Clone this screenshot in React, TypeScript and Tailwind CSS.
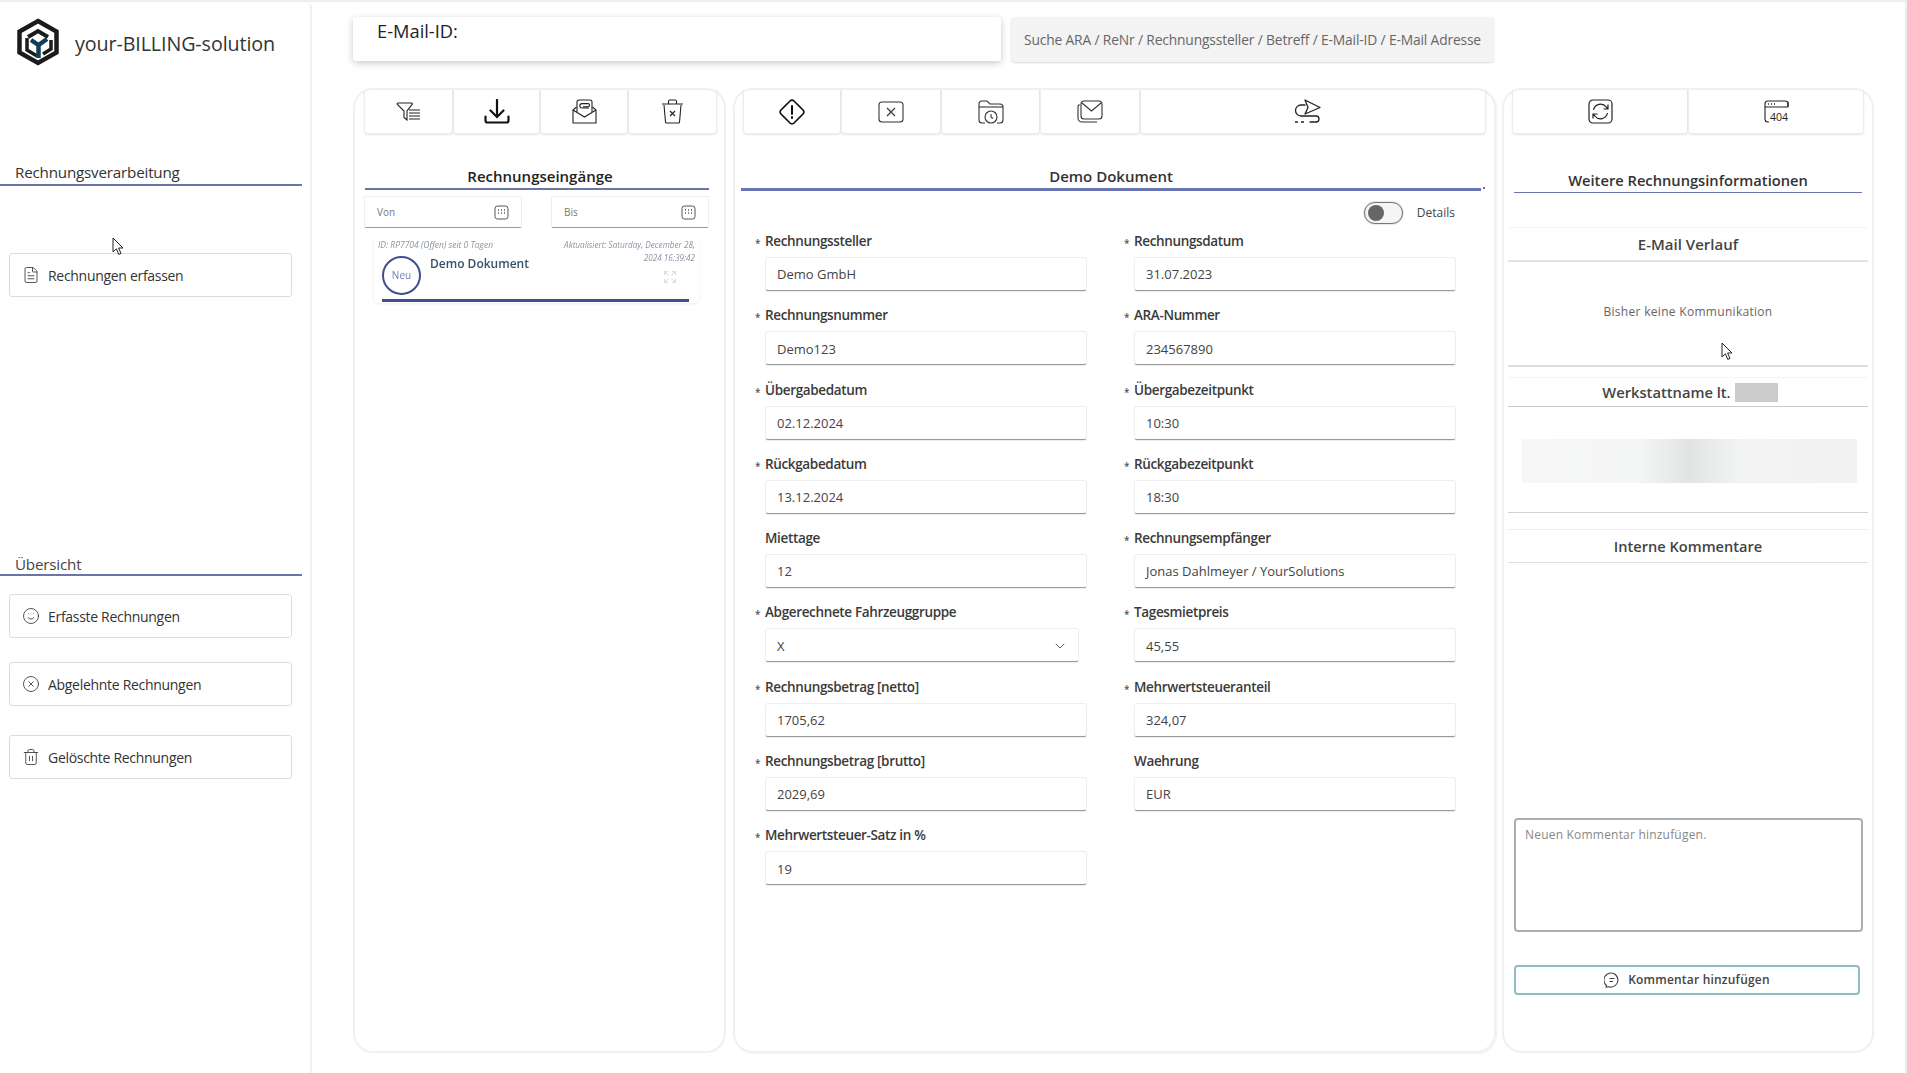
import { ChevronDown, CircleX, Expand, FileText, Smile, Trash2 } from "lucide-react";
import type { ReactNode } from "react";

const leftFields = [
  { label: "Rechnungssteller", value: "Demo GmbH", star: true },
  { label: "Rechnungsnummer", value: "Demo123", star: true },
  { label: "Übergabedatum", value: "02.12.2024", star: true },
  { label: "Rückgabedatum", value: "13.12.2024", star: true },
  { label: "Miettage", value: "12", star: false },
  { label: "Abgerechnete Fahrzeuggruppe", value: "X", star: true, select: true },
  { label: "Rechnungsbetrag [netto]", value: "1705,62", star: true },
  { label: "Rechnungsbetrag [brutto]", value: "2029,69", star: true },
  { label: "Mehrwertsteuer-Satz in %", value: "19", star: true },
];

const rightFields = [
  { label: "Rechnungsdatum", value: "31.07.2023", star: true },
  { label: "ARA-Nummer", value: "234567890", star: true },
  { label: "Übergabezeitpunkt", value: "10:30", star: true },
  { label: "Rückgabezeitpunkt", value: "18:30", star: true },
  { label: "Rechnungsempfänger", value: "Jonas Dahlmeyer / YourSolutions", star: true },
  { label: "Tagesmietpreis", value: "45,55", star: true },
  { label: "Mehrwertsteueranteil", value: "324,07", star: true },
  { label: "Waehrung", value: "EUR", star: false },
];

type FieldProps = { label: string; value: string; star: boolean; select?: boolean };

const Field = ({ label, value, star, select }: FieldProps) => (
  <div className="h-[74.3px]">
    <div className="flex h-5 items-center text-[13.5px] font-semibold leading-5 tracking-[-0.35px] text-[#3a3a3a]">
      <span className="w-[10px] pt-1 text-[10px] text-[#555]">{star ? "*" : ""}</span>
      {label}
    </div>
    <div
      className={`ml-[10px] mt-[6px] flex h-[34px] items-center justify-between rounded-[3px] border border-[#eeeeee] border-b-[#9a9a9a] pl-[11px] pr-[10px] pt-[2px] text-[13px] text-[#444] shadow-[0_1px_1px_rgba(0,0,0,0.08)] ${
        select ? "w-[314px]" : "w-[322px]"
      }`}
    >
      {value}
      {select && <ChevronDown size={16} strokeWidth={1.2} className="text-[#444]" />}
    </div>
  </div>
);

const Tab = ({ className, children }: { className: string; children: ReactNode }) => (
  <div
    className={`flex h-[44px] shrink-0 items-center justify-center rounded-b-[4px] border-x border-b border-[#ececec] shadow-[0_1px_2px_rgba(0,0,0,0.1)] ${className}`}
  >
    {children}
  </div>
);

const SideButton = ({ icon, label }: { icon: ReactNode; label: string }) => (
  <div className="flex h-[44px] w-[283px] items-center gap-[8px] rounded-[3px] border border-[#dcdcdc] pl-[12px] text-[14px] font-medium tracking-[-0.3px] text-[#333]">
    {icon}
    {label}
  </div>
);

const Cursor = ({ className }: { className: string }) => (
  <svg viewBox="0 0 12 19" className={`absolute h-[19px] w-[12px] ${className}`}>
    <path d="M1 1v14l3.4-3.2 2.4 5.6 2.2-1-2.4-5.4H11z" fill="#fff" stroke="#222" strokeWidth="1" />
  </svg>
);

const CalendarIcon = () => (
  <svg viewBox="0 0 15 15" className="h-[15px] w-[15px]" fill="none" stroke="#555" strokeWidth="1">
    <rect x="1" y="1" width="13" height="13" rx="2.5" />
    <path d="M4 5h1M7 5h1M10 5h1M4 8h1M7 8h1M10 8h1" strokeWidth="1.3" />
  </svg>
);

const Logo = () => (
  <svg viewBox="0 0 44 48" className="h-[48px] w-[44px]" fill="none">
    <path d="M22 3 40.5 13.5V34.5L22 45 3.5 34.5V13.5Z" stroke="#1b1b1b" strokeWidth="4.5" />
    <path d="M12 19 22 13 32 19" stroke="#1b1b1b" strokeWidth="4" />
    <path d="M11 20V32L21 38" stroke="#1b1b1b" strokeWidth="3.5" />
    <path d="M27 36 35 31V22" stroke="#1b1b1b" strokeWidth="3.5" />
    <path d="M15 22 22.5 27 31 21M22.5 27V40" stroke="#123f57" strokeWidth="4.5" />
  </svg>
);

const FilterIcon = () => (
  <svg viewBox="0 0 25 19" className="h-[19px] w-[25px]" fill="none" stroke="#222" strokeWidth="1.1">
    <path d="M2 1h13.5c.8 0 1 .8.6 1.4L11 9v9l-3-2.5V9L1.4 2.4C1 1.8 1.2 1 2 1z" />
    <path d="M13 8h11M13 11h11M13 14h11M13 17h11" />
  </svg>
);

const DownloadIcon = () => (
  <svg viewBox="0 0 26 25" className="h-[25px] w-[26px]" fill="none" stroke="#111" strokeWidth="2.2" strokeLinecap="round">
    <path d="M13 1v16M6.5 11.5 13 18l6.5-6.5" />
    <path d="M1.5 17.5v4a2 2 0 0 0 2 2h19a2 2 0 0 0 2-2v-4" />
  </svg>
);

const MailClipIcon = () => (
  <svg viewBox="0 0 25 25" className="h-[25px] w-[25px]" fill="none" stroke="#222" strokeWidth="1.1">
    <path d="M4.5 8 1 11v13h23V11l-3.5-3" />
    <path d="M1 11l11.5 7L24 11" />
    <path d="M5 13V3a2 2 0 0 1 2-2h11a2 2 0 0 1 2 2v10" />
    <path d="M17 9H10a2.2 2.2 0 0 1 0-4.4h6a1.6 1.6 0 0 1 0 3.2H11" />
  </svg>
);

const TrashXIcon = () => (
  <svg viewBox="0 0 23 25" className="h-[25px] w-[23px]" fill="none" stroke="#222" strokeWidth="1.1">
    <path d="M1 5h21M7.5 5V2.5a1.5 1.5 0 0 1 1.5-1.5h5a1.5 1.5 0 0 1 1.5 1.5V5" />
    <path d="M3 6l1.5 17a1 1 0 0 0 1 1h12a1 1 0 0 0 1-1L20 6" />
    <path d="M9 12l5 5M14 12l-5 5" />
  </svg>
);

const AlertIcon = () => (
  <svg viewBox="0 0 26 26" className="h-[26px] w-[26px]" fill="none" stroke="#111" strokeWidth="1.7">
    <path d="M11 2 2 11c-1.2 1.2-1.2 2.8 0 4l9 9c1.2 1.2 2.8 1.2 4 0l9-9c1.2-1.2 1.2-2.8 0-4l-9-9c-1.2-1.2-2.8-1.2-4 0z" />
    <path d="M13 7v8M13 18v1" strokeLinecap="round" strokeWidth="2" />
  </svg>
);

const XSquareIcon = () => (
  <svg viewBox="0 0 26 22" className="h-[22px] w-[26px]" fill="none" stroke="#333" strokeWidth="1.1">
    <rect x="1" y="1" width="24" height="20" rx="3" />
    <path d="M9 7l8 8M17 7l-8 8" />
  </svg>
);

const FolderClockIcon = () => (
  <svg viewBox="0 0 26 24" className="h-[24px] w-[26px]" fill="none" stroke="#333" strokeWidth="1.1">
    <path d="M7 23H4a3 3 0 0 1-3-3V4a3 3 0 0 1 3-3h5l3 3h10a3 3 0 0 1 3 3v13a3 3 0 0 1-3 3h-3" />
    <path d="M1 7h24" />
    <circle cx="13" cy="17" r="6" />
    <path d="M13 14v3l2 1.5" />
  </svg>
);

const MailStackIcon = () => (
  <svg viewBox="0 0 26 23" className="h-[23px] w-[26px]" fill="none" stroke="#333" strokeWidth="1.1">
    <rect x="4" y="1" width="21" height="18" rx="3" />
    <path d="M5 3l9.5 8L24 3" />
    <path d="M2.5 4.5 1 6v12a4 4 0 0 0 4 4h15" />
  </svg>
);

const SendRouteIcon = () => (
  <svg viewBox="0 0 27 25" className="h-[25px] w-[27px]" fill="none" stroke="#222" strokeWidth="1.3" strokeLinejoin="round">
    <path d="M11 1 26 8.5 11 15 14 8.5Z" />
    <path d="M11 6H7A5.5 5.5 0 0 0 7 17H22a3 3 0 0 1 0 6h-6" strokeLinecap="round" />
    <path d="M1 23h3M7 23h3" />
  </svg>
);

const RefreshIcon = () => (
  <svg viewBox="0 0 25 25" className="h-[25px] w-[25px]" fill="none" stroke="#222" strokeWidth="1.2">
    <rect x="1" y="1" width="23" height="23" rx="4" />
    <path d="M5.5 11a7.2 7.2 0 0 1 12.7-3l1.8 2M20 5.5V10h-4.5" />
    <path d="M19.5 14a7.2 7.2 0 0 1-12.7 3L5 15M5 19.5V15h4.5" />
  </svg>
);

const Window404Icon = () => (
  <svg viewBox="0 0 25 23" className="h-[23px] w-[25px]" fill="none" stroke="#222" strokeWidth="1.1">
    <path d="M5 22H4a3 3 0 0 1-3-3V4a3 3 0 0 1 3-3h17a3 3 0 0 1 3 3v3" />
    <path d="M24 1.5V7M1 7h23" />
    <path d="M4 4h1M7 4h1M10 4h1" strokeWidth="1.4" />
    <text x="6" y="21" fontSize="10.5" fill="#222" stroke="none" fontFamily="'Open Sans', sans-serif">
      404
    </text>
  </svg>
);

const CommentIcon = () => (
  <svg viewBox="0 0 16 16" className="h-[16px] w-[16px]" fill="none" stroke="#444" strokeWidth="1.1">
    <path d="M2.5 13.5A7 7 0 1 1 5 14.8l-3 .5z" strokeLinejoin="round" />
    <path d="M5.5 6.5h5M5.5 9.5h3.5" />
  </svg>
);

const SectionTitle = ({ children, className }: { children: ReactNode; className: string }) => (
  <div className={`text-center font-semibold text-[#444] ${className}`}>{children}</div>
);

export default function App() {
  return (
    <div className="relative flex h-[1073px] w-[1907px] overflow-hidden border-t-2 border-r-2 border-[#eeeeee] bg-white font-['Open_Sans',sans-serif] text-[#222]">
      {/* sidebar */}
      <aside className="h-full w-[312px] shrink-0 rounded-tr-[6px] border-r-2 border-[#f0f0f0]">
        <div className="flex items-center gap-[15px] pl-[16px] pt-[16px]">
          <Logo />
          <span className="pt-[4px] text-[19.7px] font-medium tracking-[-0.1px] text-[#333]">your-BILLING-solution</span>
        </div>
        <div className="mt-[95px] w-[302px] border-b-2 border-[#6a75a8] pb-[1px] pl-[15px] text-[15.2px] leading-[22px] tracking-[-0.2px] text-[#333]">
          Rechnungsverarbeitung
        </div>
        <div className="ml-[9px] mt-[67px]">
          <SideButton icon={<FileText size={18} strokeWidth={1.1} />} label="Rechnungen erfassen" />
        </div>
        <div className="mt-[257px] w-[302px] border-b-2 border-[#6a75a8] pl-[15px] text-[15.2px] leading-[20px] tracking-[-0.2px] text-[#444]">
          Übersicht
        </div>
        <div className="ml-[9px] mt-[18px] flex flex-col">
          <SideButton icon={<Smile size={18} strokeWidth={1.1} />} label="Erfasste Rechnungen" />
          <div className="mt-[24px]">
            <SideButton icon={<CircleX size={18} strokeWidth={1.1} />} label="Abgelehnte Rechnungen" />
          </div>
          <div className="mt-[29px]">
            <SideButton icon={<Trash2 size={18} strokeWidth={1.1} />} label="Gelöschte Rechnungen" />
          </div>
        </div>
      </aside>

      {/* main */}
      <main className="flex-1 pl-[41px] pt-[15px]">
        <div className="flex gap-[10px]">
          <div className="h-[44px] w-[648px] rounded-[3px] pl-[24px] pt-[1px] text-[18.3px] leading-[26px] shadow-[0_2px_7px_rgba(0,0,0,0.22)]">
            E-Mail-ID:
          </div>
          <div className="flex h-[45px] w-[483px] items-center justify-center rounded-[4px] bg-[#f3f3f3] pt-[2px] text-[13.8px] tracking-[-0.15px] text-[#666] shadow-[0_1px_2px_rgba(0,0,0,0.15)]">
            Suche ARA / ReNr / Rechnungssteller / Betreff / E-Mail-ID / E-Mail Adresse
          </div>
        </div>

        <div className="mt-[26px] flex h-[965px] gap-[7px]">
          {/* Rechnungseingänge */}
          <section className="h-full w-[373px] shrink-0 rounded-[20px] border-2 border-[#f0f0f0] pl-[9px]">
            <div className="flex">
              <Tab className="w-[89px]"><FilterIcon /></Tab>
              <Tab className="w-[87px]"><DownloadIcon /></Tab>
              <Tab className="w-[88px]"><MailClipIcon /></Tab>
              <Tab className="w-[89px]"><TrashXIcon /></Tab>
            </div>
            <div className="ml-px mt-[31px] w-[344px] border-b-2 border-[#6a75a8] pb-[1px] pl-[6px] text-center text-[15px] font-semibold leading-[22px] text-[#222]">
              Rechnungseingänge
            </div>
            <div className="mt-[6px] flex w-[345px] justify-between">
              <div className="flex h-[32px] w-[158px] items-center justify-between rounded-[2px] border border-[#eeeeee] border-b-[#999] pl-[12px] pr-[12px] text-[10px] text-[#777]">
                Von <CalendarIcon />
              </div>
              <div className="flex h-[32px] w-[158px] items-center justify-between rounded-[2px] border border-[#eeeeee] border-b-[#999] pl-[12px] pr-[12px] text-[10px] text-[#777]">
                Bis <CalendarIcon />
              </div>
            </div>
            <div className="ml-[10px] mt-[8px] h-[67px] w-[325px] rounded-[4px] pl-[8px] pr-[10px] pt-[2px] shadow-[0_1px_3px_rgba(0,0,0,0.08)]">
              <div className="flex h-[64px] justify-between border-b-[3px] border-[#3e4f8f]">
                <div className="flex flex-col">
                  <span className="-ml-[4px] text-[8.5px] italic leading-[14px] text-[#8a94a4] blur-[0.3px]">ID: RP7704 (Offen)  seit 0 Tagen</span>
                  <div className="flex">
                    <div className="mt-[4px] flex h-[39px] w-[39px] items-center justify-center rounded-full border-2 border-[#3e4f8f] text-[10px] font-medium text-[#6a7fb5] blur-[0.3px]">
                      Neu
                    </div>
                    <span className="ml-[9px] pt-[3px] text-[12px] font-semibold leading-[18px] text-[#34526b] blur-[0.3px]">Demo Dokument</span>
                  </div>
                </div>
                <div className="-mr-[6px] flex w-[140px] flex-col items-end text-right text-[8.2px] italic leading-[13px] text-[#8a94a4] blur-[0.3px]">
                  Aktualisiert: Saturday, December 28, 2024 16:39:42
                  <Expand size={14} strokeWidth={1} className="mr-[18px] mt-[6px] text-[#bbb]" />
                </div>
              </div>
            </div>
          </section>

          {/* Demo Dokument */}
          <section className="relative h-full w-[763px] shrink-0 rounded-[20px] border-2 border-[#f0f0f0] px-[8px] shadow-[1px_1px_2px_rgba(0,0,0,0.06)]">
            <div className="flex">
              <Tab className="w-[98px]"><AlertIcon /></Tab>
              <Tab className="w-[100px]"><XSquareIcon /></Tab>
              <Tab className="w-[99px]"><FolderClockIcon /></Tab>
              <Tab className="w-[100px]"><MailStackIcon /></Tab>
              <Tab className="w-[346px] pr-[12px]"><SendRouteIcon /></Tab>
            </div>
            <div className="-ml-[2px] mr-[5px] mt-[31px] border-b-[3px] border-[#6a75b5] text-center text-[15px] font-semibold leading-[23px] text-[#333]">
              Demo Dokument
            </div>
            <span className="absolute left-[748px] top-[97px] h-[2px] w-[2px] bg-[#6a75b5]" />
            <div className="mr-[31px] mt-[11px] flex items-center justify-end gap-[14px] text-[12px] text-[#444]">
              <div className="flex h-[22px] w-[39px] items-center rounded-full border border-[#777] bg-[#f5f5f5] pl-[3px] shadow-[0_0_2px_rgba(0,0,0,0.3)]">
                <div className="h-[16px] w-[16px] rounded-full bg-[#666]" />
              </div>
              Details
            </div>
            <div className="ml-[12px] mt-[7px] flex">
              <div className="w-[369px]">
                {leftFields.map((f) => (
                  <Field key={f.label} {...f} />
                ))}
              </div>
              <div>
                {rightFields.map((f) => (
                  <Field key={f.label} {...f} />
                ))}
              </div>
            </div>
          </section>

          {/* Weitere Rechnungsinformationen */}
          <section className="-ml-px h-full w-[372px] shrink-0 rounded-[20px] border-2 border-[#f0f0f0] px-[4px]">
            <div className="flex pl-[4px]">
              <Tab className="w-[176px]"><RefreshIcon /></Tab>
              <Tab className="w-[176px]"><Window404Icon /></Tab>
            </div>
            <div className="mx-[6px] mt-[35px] border-b border-[#6a75a8] pb-[1px] text-center text-[14.7px] font-semibold leading-[22px] text-[#333]">
              Weitere Rechnungsinformationen
            </div>
            <SectionTitle className="mt-[34px] border-y border-t-[#f4f4f4] border-b-[#e2e2e2] border-b-2 py-[5px] text-[15px] leading-[22px]">
              E-Mail Verlauf
            </SectionTitle>
            <div className="h-[105px] border-b-2 border-[#dddddd] pt-[41px] text-center text-[12px] leading-[18px] tracking-[0.3px] text-[#666]">
              Bisher keine Kommunikation
            </div>
            <SectionTitle className="mt-[10px] flex h-[30px] items-center justify-center gap-[4px] border-y border-t-[#f4f4f4] border-b-[#cccccc] pl-[4px] text-[14.7px]">
              Werkstattname lt.
              <span className="h-[19px] w-[43px] bg-[#cccccc]" />
            </SectionTitle>
            <div className="h-[106px] border-b border-[#d8d0d4] pt-[32px]">
              <div className="ml-[14px] mr-[11px] h-[44px] bg-[linear-gradient(90deg,#f7f7f7_0%,#f4f5f5_35%,#e2e3e3_50%,#f2f3f3_65%,#f2f2f2_100%)]" />
            </div>
            <SectionTitle className="mt-[16px] border-y border-t-[#eeeeee] border-b-[#dddddd] py-[4px] text-[14.6px] leading-[24px]">
              Interne Kommentare
            </SectionTitle>
            <div className="ml-[6px] mr-[5px] mt-[255px] h-[114px] rounded-[4px] border-2 border-[#a9afb4] px-[9px] pt-[6px] text-[12px] leading-[18px] tracking-[0.2px] text-[#888]">
              Neuen Kommentar hinzufügen.
            </div>
            <div className="mx-[6px] mt-[33px] flex h-[30px] w-[346px] items-center justify-center gap-[8px] rounded-[4px] border-2 border-[#8fbcc4] text-[12px] font-semibold tracking-[0.2px] text-[#444]">
              <CommentIcon />
              Kommentar hinzufügen
            </div>
          </section>
        </div>
      </main>

      <Cursor className="left-[112px] top-[235px]" />
      <Cursor className="left-[1721px] top-[340px]" />
    </div>
  );
}
